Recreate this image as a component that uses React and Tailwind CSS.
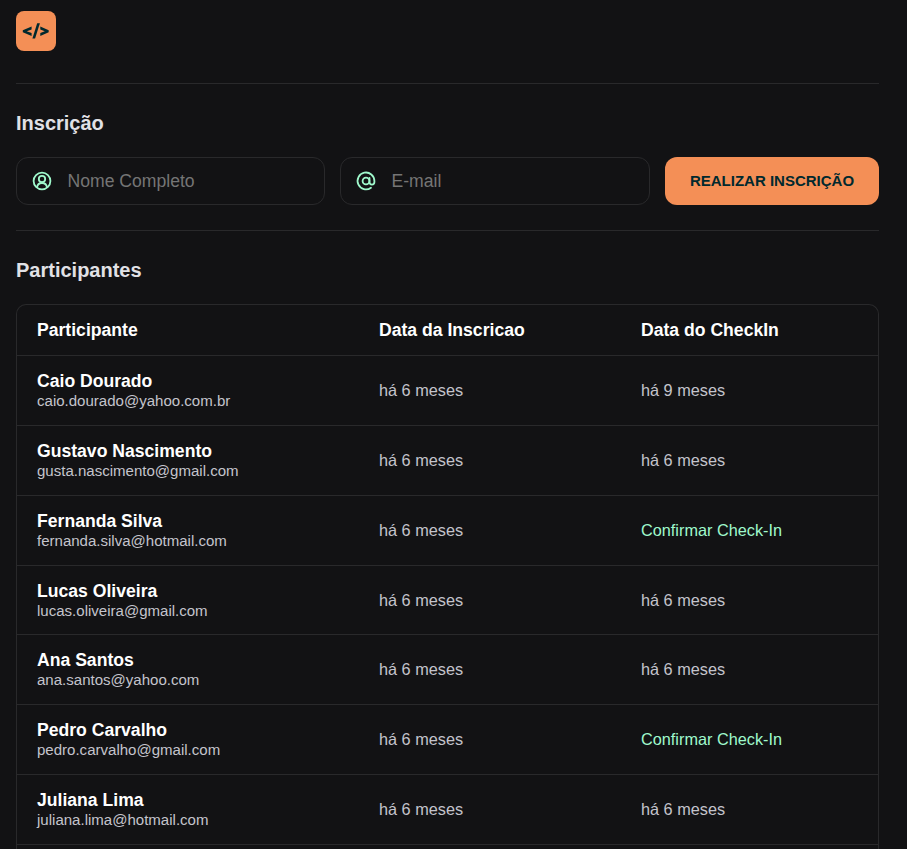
const participants = [
  ['Caio Dourado', 'caio.dourado@yahoo.com.br', 'há 9 meses'],
  ['Gustavo Nascimento', 'gusta.nascimento@gmail.com', 'há 6 meses'],
  ['Fernanda Silva', 'fernanda.silva@hotmail.com', null],
  ['Lucas Oliveira', 'lucas.oliveira@gmail.com', 'há 6 meses'],
  ['Ana Santos', 'ana.santos@yahoo.com', 'há 6 meses'],
  ['Pedro Carvalho', 'pedro.carvalho@gmail.com', null],
  ['Juliana Lima', 'juliana.lima@hotmail.com', 'há 6 meses'],
];

function Logo() {
  return (
    <svg className="block size-10" viewBox="0 0 40 40" fill="#00292E">
      <rect width="40" height="40" rx="8" fill="#F48F56" />
      <path d="M15.6 15.6 6.8 19.3v2l8.8 3.8v-3l-4.8-1.8 4.8-1.7zM24.3 15.6l8.4 3.7v2l-8.4 3.8v-3l4.5-1.8-4.5-1.7z" />
      <path d="M21.2 12.3h2.7L19.1 27.5h-2.7z" />
    </svg>
  );
}

function UserIcon() {
  return (
    <svg className="size-6 shrink-0" viewBox="0 0 24 24" fill="none" stroke="#9FF9CC" strokeWidth="1.8">
      <circle cx="12" cy="12" r="8.4" />
      <circle cx="12" cy="10" r="3.2" />
      <path d="M7 18.5c.4-3 2.300-4.500 5-4.500s4.600 1.500 5 4.500" />
    </svg>
  );
}

function AtIcon() {
  return (
    <svg className="size-6 shrink-0" viewBox="0 0 24 24" fill="none" stroke="#9FF9CC" strokeWidth="1.8" strokeLinecap="round">
      <circle cx="12" cy="12" r="3.4" />
      <path d="M15.5 9V13.1a2.4 2.4 0 0 0 4.9 0V12a8.4 8.4 0 1 0-3.400 6.700" />
    </svg>
  );
}

function Field({ icon, type, placeholder }) {
  return (
    <label className="flex h-12 min-w-0 items-center gap-[13.5px] rounded-xl border border-[#29292b] pl-[13px]">
      {icon}
      <input
        type={type}
        placeholder={placeholder}
        className="min-w-0 flex-1 bg-transparent text-[17.6px] leading-6 text-[#e1e1e6] outline-none placeholder:text-[#757575]"
      />
    </label>
  );
}

export default function App() {
  return (
    <div className="h-[849px] overflow-hidden bg-[#121214] pr-7 pl-4 pt-[11px] font-['Liberation_Sans',Arial,sans-serif] text-[#e1e1e6]">
      <header className="h-[73px] border-b border-[#29292b]">
        <Logo />
      </header>

      <section className="h-[147px] border-b border-[#29292b] pt-[27px]">
        <h2 className="text-xl leading-6 font-bold">Inscrição</h2>
        <form className="mt-[22px] grid grid-cols-[309px_310px_214px] gap-[15px]">
          <Field icon={<UserIcon />} type="text" placeholder="Nome Completo" />
          <Field icon={<AtIcon />} type="email" placeholder="E-mail" />
          <button type="button" className="h-12 rounded-xl bg-[#F48F56] text-[15px] font-bold text-[#00292E]">
            REALIZAR INSCRIÇÃO
          </button>
        </form>
      </section>

      <section className="pt-[27px]">
        <h2 className="text-xl leading-6 font-bold">Participantes</h2>
        <div className="mt-[22px] rounded-t-[10px] border border-b-0 border-[#29292b] pb-2">
          <div className="grid h-[50px] grid-cols-[342px_262px_1fr] items-center pl-5 text-[17.6px] font-bold text-white">
            <span>Participante</span>
            <span>Data da Inscricao</span>
            <span>Data do CheckIn</span>
          </div>
          {participants.map(([name, email, checkIn]) => (
            <div
              key={email}
              className="grid h-[69.85px] grid-cols-[342px_262px_1fr] items-start border-t border-[#29292b] pl-5 text-[16.28px] leading-5 text-[#c4c4cc] last:h-[70.85px] last:border-b"
            >
              <div className="pt-[15px]">
                <p className="text-[17.6px] leading-5 font-bold text-white">{name}</p>
                <p className="text-[15.04px] leading-5">{email}</p>
              </div>
              <span className="pt-6">há 6 meses</span>
              {checkIn ? (
                <span className="pt-6">{checkIn}</span>
              ) : (
                <a href="#" className="pt-6 text-[#9FF9CC]">Confirmar Check-In</a>
              )}
            </div>
          ))}
        </div>
      </section>
    </div>
  );
}
